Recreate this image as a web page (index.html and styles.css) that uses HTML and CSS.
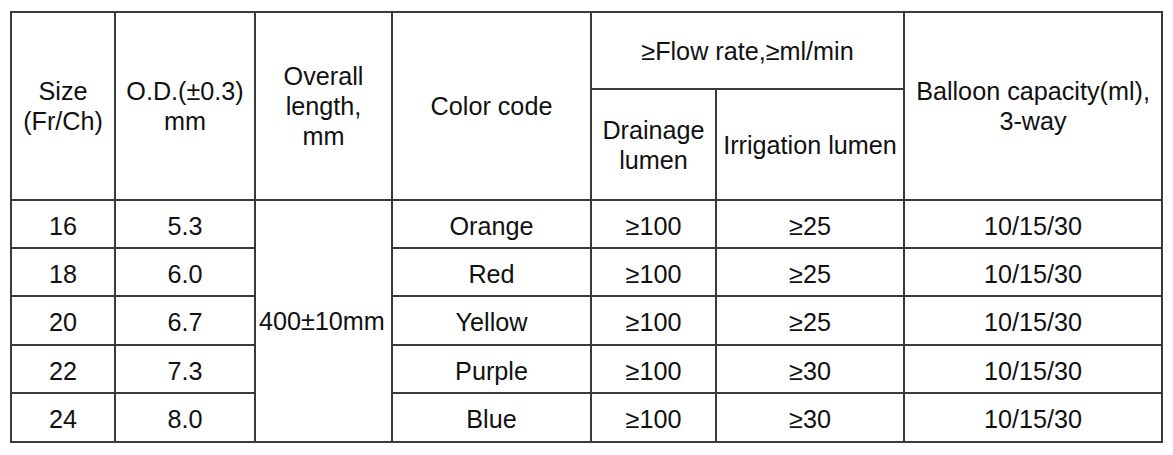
FILE: index.html
```html
<!DOCTYPE html>
<html>
<head>
<meta charset="utf-8">
<link rel="stylesheet" href="styles.css">
</head>
<body>
<table class="spec">
  <colgroup>
    <col class="c1"><col class="c2"><col class="c3"><col class="c4"><col class="c5"><col class="c6"><col class="c7">
  </colgroup>
  <tr class="h1">
    <td rowspan="2">Size<br>(Fr/Ch)</td>
    <td rowspan="2">O.D.(±0.3)<br>mm</td>
    <td rowspan="2">Overall<br>length,<br>mm</td>
    <td rowspan="2">Color code</td>
    <td colspan="2">≥Flow rate,≥ml/min</td>
    <td rowspan="2">Balloon capacity(ml),<br>3-way</td>
  </tr>
  <tr class="h2">
    <td>Drainage<br>lumen</td>
    <td>Irrigation lumen</td>
  </tr>
  <tr class="r">
    <td>16</td><td>5.3</td><td rowspan="5" class="len">400±10mm</td><td>Orange</td><td>≥100</td><td>≥25</td><td>10/15/30</td>
  </tr>
  <tr class="r">
    <td>18</td><td>6.0</td><td>Red</td><td>≥100</td><td>≥25</td><td>10/15/30</td>
  </tr>
  <tr class="r r3">
    <td>20</td><td>6.7</td><td>Yellow</td><td>≥100</td><td>≥25</td><td>10/15/30</td>
  </tr>
  <tr class="r">
    <td>22</td><td>7.3</td><td>Purple</td><td>≥100</td><td>≥30</td><td>10/15/30</td>
  </tr>
  <tr class="r r3">
    <td>24</td><td>8.0</td><td>Blue</td><td>≥100</td><td>≥30</td><td>10/15/30</td>
  </tr>
</table>
</body>
</html>
```

FILE: styles.css
```css
html, body {
  margin: 0;
  padding: 0;
  background: #ffffff;
}

body {
  padding: 11px 0 0 10px;
  font-family: "Liberation Sans", Arial, sans-serif;
  color: #111111;
}

.spec {
  border-collapse: separate;
  border-spacing: 0;
  table-layout: fixed;
  width: 1153px;
  border-left: 2px solid #3a3a3a;
  border-top: 2px solid #3a3a3a;
  font-size: 25.2px;
  line-height: 30px;
}

.c1 { width: 104px; }
.c2 { width: 140px; }
.c3 { width: 137px; }
.c4 { width: 199px; }
.c5 { width: 125px; }
.c6 { width: 188px; }
.c7 { width: 258px; }

.spec td {
  box-sizing: border-box;
  border-right: 2px solid #3a3a3a;
  border-bottom: 2px solid #3a3a3a;
  text-align: center;
  vertical-align: middle;
  padding: 0;
  white-space: nowrap;
}

.h1 td { height: 77px; }
.h2 td { height: 111px; }
.r td { height: 48px; padding-top: 3px; }
.r3 td { height: 49px; }

.spec td.len {
  text-align: left;
  padding: 0 0 0 3px;
}
```
